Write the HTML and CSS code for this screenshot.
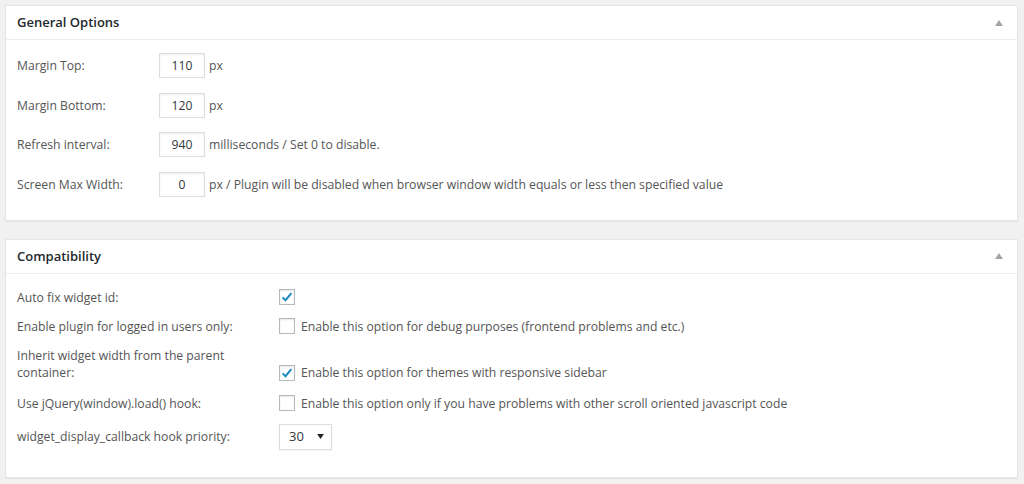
FILE: index.html
```html
<!DOCTYPE html>
<html lang="en">
<head>
    <meta charset="UTF-8">
    <title>Sticky Widget Options</title>
    <link rel="stylesheet" href="styles.css">
</head>
<body>

<div class="postbox">
    <div class="postbox-header">
        <h2>General Options</h2>
        <span class="toggle"></span>
    </div>
    <div class="inside general">
        <div class="row">
            <label>Margin Top:</label>
            <input type="text" class="small-text" value="110">
            <span class="desc">px</span>
        </div>
        <div class="row">
            <label>Margin Bottom:</label>
            <input type="text" class="small-text" value="120">
            <span class="desc">px</span>
        </div>
        <div class="row">
            <label>Refresh interval:</label>
            <input type="text" class="small-text" value="940">
            <span class="desc">milliseconds / Set 0 to disable.</span>
        </div>
        <div class="row">
            <label>Screen Max Width:</label>
            <input type="text" class="small-text" value="0">
            <span class="desc">px / Plugin will be disabled when browser window width equals or less then specified value</span>
        </div>
    </div>
</div>

<div class="postbox">
    <div class="postbox-header">
        <h2>Compatibility</h2>
        <span class="toggle"></span>
    </div>
    <div class="inside compat">
        <div class="row">
            <label>Auto fix widget id:</label>
            <span class="checkbox"><svg viewBox="0 0 16 16" width="16" height="16"><path d="M3.6 8.4 L6.5 11.2 L12.4 4.2" fill="none" stroke="#1e8cbe" stroke-width="2"/></svg></span>
        </div>
        <div class="row">
            <label>Enable plugin for logged in users only:</label>
            <span class="checkbox"></span>
            <span class="desc">Enable this option for debug purposes (frontend problems and etc.)</span>
        </div>
        <div class="row bottom">
            <label>Inherit widget width from the parent container:</label>
            <span class="checkbox"><svg viewBox="0 0 16 16" width="16" height="16"><path d="M3.6 8.4 L6.5 11.2 L12.4 4.2" fill="none" stroke="#1e8cbe" stroke-width="2"/></svg></span>
            <span class="desc">Enable this option for themes with responsive sidebar</span>
        </div>
        <div class="row">
            <label>Use jQuery(window).load() hook:</label>
            <span class="checkbox"></span>
            <span class="desc">Enable this option only if you have problems with other scroll oriented javascript code</span>
        </div>
        <div class="row">
            <label>widget_display_callback hook priority:</label>
            <span class="select">30 <svg viewBox="0 0 8 6" width="7" height="5"><path d="M0 0 L8 0 L4 6 Z" fill="#222"/></svg></span>
        </div>
    </div>
</div>

</body>
</html>
```

FILE: styles.css
```css
body {
    margin: 0;
    padding: 5px 6px 5px 5px;
    background-color: #f1f1f1;
    font-family: 'Open Sans', 'Liberation Sans', sans-serif;
    font-size: 12.2px;
    line-height: 17px;
    color: #555;
}
.postbox {
    background-color: #fff;
    border: 1px solid #e5e5e5;
    box-shadow: 0 1px 1px rgba(0, 0, 0, 0.04);
    margin-bottom: 18px;
}
.postbox-header {
    display: flex;
    justify-content: space-between;
    align-items: center;
    height: 33px;
    padding: 0 14px 0 11px;
    border-bottom: 1px solid #eee;
}
h2 {
    margin: 0;
    font-size: 13px;
    font-weight: 600;
    color: #23282d;
}
.toggle {
    width: 0;
    height: 0;
    border-left: 4px solid transparent;
    border-right: 4px solid transparent;
    border-bottom: 6px solid #a0a5aa;
}
.inside {
    display: flex;
    flex-direction: column;
    padding: 13px 11px 23px;
}
.general {
    gap: 14.5px;
}
.compat {
    padding: 9px 11px 21px;
}
.row {
    display: flex;
    align-items: center;
}
.compat .row {
    padding: 6px 0;
}
.compat .row.bottom {
    align-items: flex-end;
    padding-bottom: 8px;
}
.general label {
    width: 142px;
}
.compat label {
    width: 220px;
    margin-right: 42px;
}
.small-text {
    width: 46px;
    height: 25px;
    box-sizing: border-box;
    border: 1px solid #ddd;
    box-shadow: inset 0 1px 2px rgba(0, 0, 0, 0.07);
    font-family: inherit;
    font-size: 12.2px;
    color: #32373c;
    text-align: center;
    padding: 0 2px;
    margin: 0 4px 0 0;
}
.checkbox {
    display: inline-flex;
    width: 16px;
    height: 16px;
    box-sizing: border-box;
    border: 1px solid #b4b9be;
    box-shadow: inset 0 1px 2px rgba(0, 0, 0, 0.1);
    margin-right: 6px;
    align-items: center;
    justify-content: center;
}
.checkbox svg {
    flex: none;
}
.select {
    display: inline-flex;
    align-items: center;
    justify-content: space-between;
    width: 53px;
    height: 26px;
    box-sizing: border-box;
    border: 1px solid #ddd;
    box-shadow: 0 1px 2px rgba(0, 0, 0, 0.05);
    padding: 0 7px 0 9px;
    font-size: 13px;
    color: #32373c;
}
```
